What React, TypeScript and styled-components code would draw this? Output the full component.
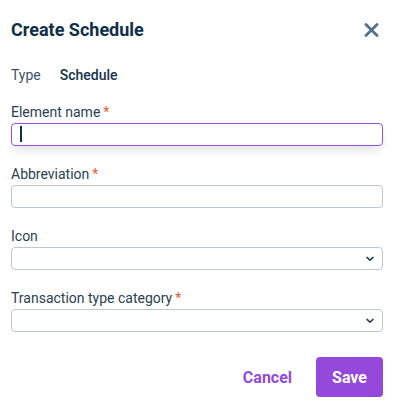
import React, { useState } from 'react';
import styled, { createGlobalStyle } from 'styled-components';

const GlobalStyle = createGlobalStyle`
  html, body {
    margin: 0;
    padding: 0;
    background: #ffffff;
  }
  body {
    font-family: Roboto, "Liberation Sans", Arial, sans-serif;
    color: #23384b;
  }
  * {
    box-sizing: border-box;
  }
`;

const Dialog = styled.div`
  width: 401px;
  padding: 19px 18px 18px 11px;
  display: flex;
  flex-direction: column;
`;

const Header = styled.div`
  display: flex;
  align-items: center;
  justify-content: space-between;
  padding-right: 4px;
`;

const Title = styled.h1`
  margin: 0;
  font-size: 18px;
  line-height: 22px;
  font-weight: 700;
  color: #0f2e47;
`;

const CloseButton = styled.button`
  border: none;
  background: none;
  padding: 0;
  width: 16px;
  height: 16px;
  display: flex;
  align-items: center;
  justify-content: center;
  cursor: pointer;
`;

const TypeRow = styled.div`
  display: flex;
  gap: 19px;
  margin-top: 26px;
  font-size: 14px;
  line-height: 16px;
`;

const TypeLabel = styled.span`
  color: #3b5268;
`;

const TypeValue = styled.span`
  color: #15324b;
  font-weight: 500;
`;

const Fields = styled.div`
  display: flex;
  flex-direction: column;
  gap: 20px;
  margin-top: 21px;
`;

const Field = styled.div`
  display: flex;
  flex-direction: column;
  gap: 3px;
`;

const Label = styled.label`
  font-size: 14px;
  line-height: 16px;
  color: #2a3f52;
`;

const Required = styled.span`
  color: #e4602e;
  margin-left: 3px;
`;

const TextInput = styled.input<{ $focused?: boolean }>`
  width: 100%;
  height: 23px;
  border-radius: 4px;
  border: ${p => (p.$focused ? '1.5px solid #9b4ee3' : '1px solid #bcc7cf')};
  box-shadow: ${p => (p.$focused ? '0 7px 10px -3px rgba(40, 50, 70, 0.14)' : 'none')};
  padding: 0 8px;
  font-family: inherit;
  font-size: 14px;
  color: #0f2e47;
  caret-color: #0f2e47;
  outline: none;
  background: #fff;
`;

const SelectBox = styled.div`
  height: 23px;
  border: 1px solid #bcc7cf;
  border-radius: 4px;
  background: #fff;
  display: flex;
  align-items: center;
  justify-content: flex-end;
  padding-right: 7px;
`;

const Cursor = styled.span`
  position: absolute;
  left: 9px;
  top: 3px;
  width: 1.5px;
  height: 16px;
  background: #0f2e47;
`;

const FocusWrap = styled.div`
  position: relative;
`;

const Actions = styled.div`
  display: flex;
  justify-content: flex-end;
  align-items: center;
  gap: 8px;
  margin-top: 25px;
`;

const ActionButton = styled.button<{ $primary?: boolean }>`
  height: 40px;
  padding: 0 16px;
  border: none;
  border-radius: 4px;
  font-family: inherit;
  font-size: 16px;
  font-weight: 700;
  cursor: pointer;
  background: ${p => (p.$primary ? '#9549da' : 'transparent')};
  color: ${p => (p.$primary ? '#ffffff' : '#9549da')};
`;

const Chevron = () => (
  <svg width="10" height="6" viewBox="0 0 10 6" fill="none">
    <path d="M2 1.4 L5 4.3 L8 1.4" stroke="#24394c" strokeWidth="1.5" strokeLinecap="round" strokeLinejoin="round" />
  </svg>
);

const CloseIcon = () => (
  <svg width="15" height="14" viewBox="0 0 15 14" fill="none">
    <path d="M2 1.5 L13 12.5 M13 1.5 L2 12.5" stroke="#52708a" strokeWidth="2.8" strokeLinecap="round" />
  </svg>
);

export default function App() {
  const [name, setName] = useState('');
  const [abbr, setAbbr] = useState('');

  return (
    <>
      <GlobalStyle />
      <Dialog>
        <Header>
          <Title>Create Schedule</Title>
          <CloseButton aria-label="Close">
            <CloseIcon />
          </CloseButton>
        </Header>

        <TypeRow>
          <TypeLabel>Type</TypeLabel>
          <TypeValue>Schedule</TypeValue>
        </TypeRow>

        <Fields>
          <Field>
            <Label>
              Element name<Required>*</Required>
            </Label>
            <FocusWrap>
              <TextInput $focused value={name} onChange={e => setName(e.target.value)} />
              {name === '' && <Cursor />}
            </FocusWrap>
          </Field>

          <Field>
            <Label>
              Abbreviation<Required>*</Required>
            </Label>
            <TextInput value={abbr} onChange={e => setAbbr(e.target.value)} />
          </Field>

          <Field>
            <Label>Icon</Label>
            <SelectBox>
              <Chevron />
            </SelectBox>
          </Field>

          <Field>
            <Label>
              Transaction type category<Required>*</Required>
            </Label>
            <SelectBox>
              <Chevron />
            </SelectBox>
          </Field>
        </Fields>

        <Actions>
          <ActionButton>Cancel</ActionButton>
          <ActionButton $primary>Save</ActionButton>
        </Actions>
      </Dialog>
    </>
  );
}
